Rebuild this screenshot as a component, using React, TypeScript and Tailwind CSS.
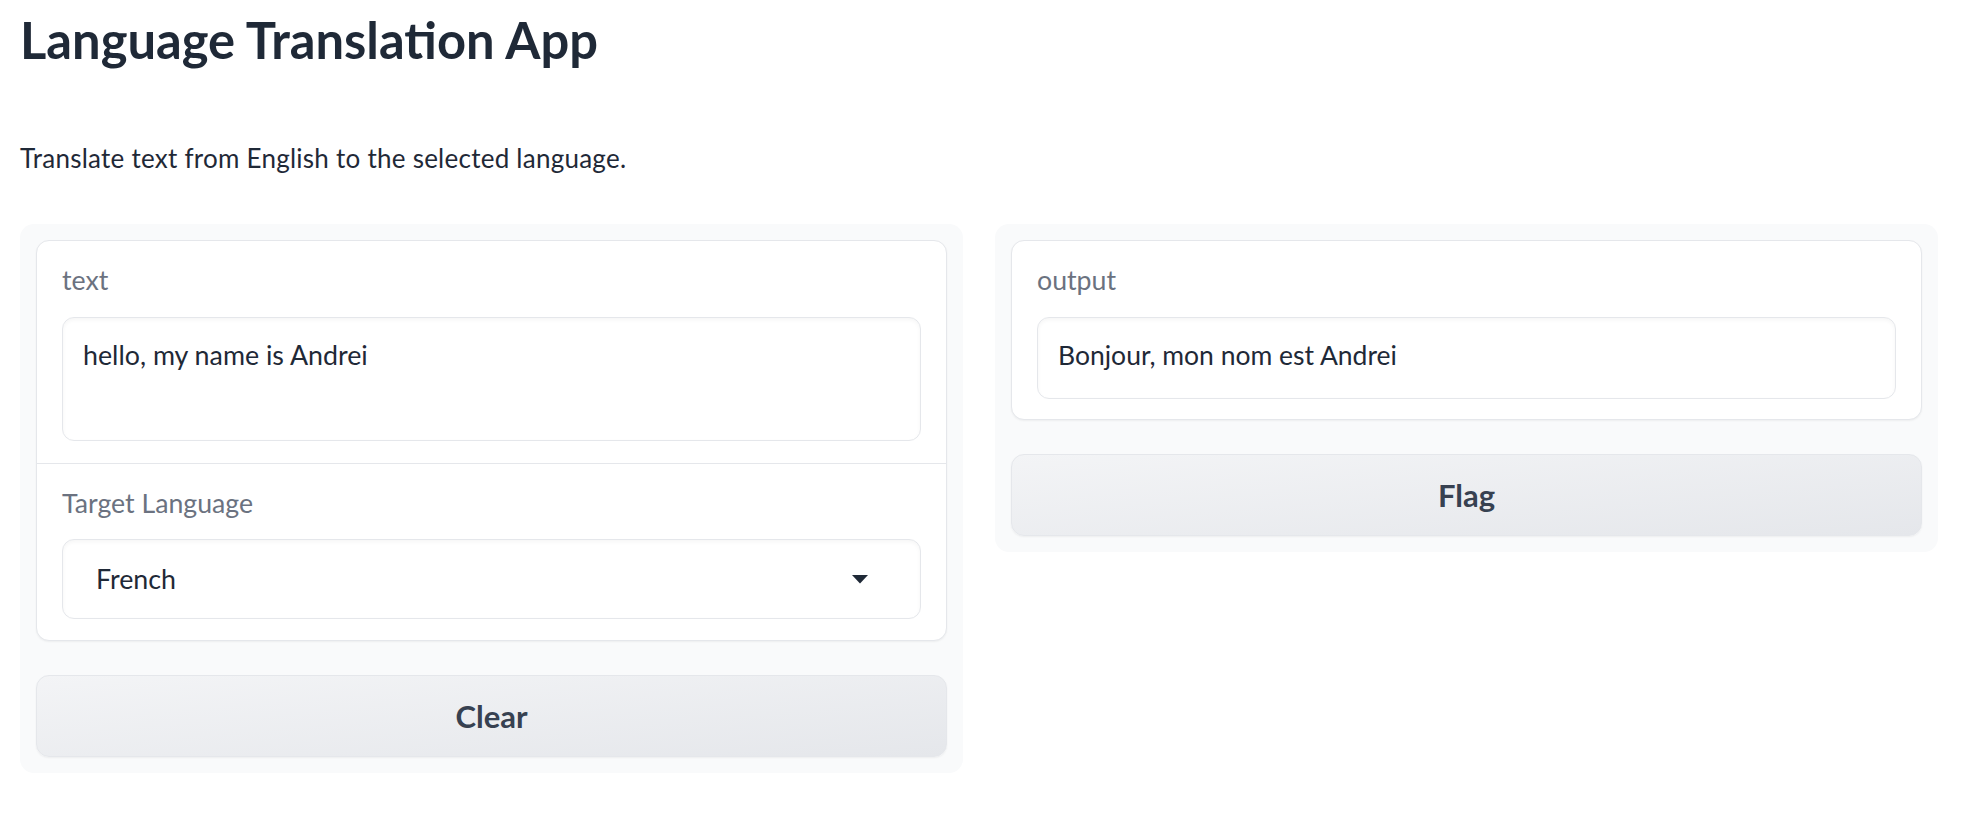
import React from "react";

const font = { fontFamily: "Lato, 'Noto Sans', sans-serif" };

function Label({ children, mb }: { children: React.ReactNode; mb: "a" | "b" }) {
  return (
    <div
      className={
        "h-[36px] text-[26.7px] leading-[36px] text-[#6b7280] " +
        (mb === "a" ? "mb-[19px]" : "mb-[18px]")
      }
    >
      {children}
    </div>
  );
}

export default function App() {
  return (
    <div className="w-[1976px] h-[836px] bg-white px-[20px] pt-[10px]" style={font}>
      <h1 className="h-[60px] text-[50.7px] leading-[60px] font-bold text-[#1f2937]">
        Language Translation App
      </h1>
      <p className="mt-[73px] text-[26px] tracking-[0.25px] leading-[30px] text-[#1f2937]">
        Translate text from English to the selected language.
      </p>
      <div className="mt-[51px] flex items-start gap-[32px]">
        {/* Left column */}
        <div className="w-[943px] bg-[#f9fafb] rounded-[14px] p-[16px] flex flex-col gap-[34px]">
          <div className="bg-white border border-[#e5e7eb] rounded-[13px] shadow-[0_1px_2px_rgba(0,0,0,0.05)]">
            <div className="px-[25px] pt-[21px] pb-[22px] border-b border-[#e5e7eb]">
              <Label mb="a">text</Label>
              <div className="h-[124px] rounded-[12px] border border-[#e5e7eb] shadow-[inset_0_2px_4px_rgba(0,0,0,0.04)] px-[20px] pt-[19px] text-[26.8px] leading-[36px] text-[#1f2937]">
                hello, my name is Andrei
              </div>
            </div>
            <div className="px-[25px] pt-[21px] pb-[21px]">
              <Label mb="b">Target Language</Label>
              <div className="h-[80px] rounded-[12px] border border-[#e5e7eb] shadow-[inset_0_2px_4px_rgba(0,0,0,0.04)] pl-[33px] pr-[52px] flex items-center justify-between text-[26.8px] text-[#1f2937]">
                <span>French</span>
                <svg width="16" height="9" viewBox="0 0 16 9">
                  <path d="M0 0 L16 0 L8 8.5 Z" fill="#1f2937" />
                </svg>
              </div>
            </div>
          </div>
          <button className="h-[82px] rounded-[13px] border border-[#e5e7eb] bg-gradient-to-br from-[#f3f4f6] to-[#e5e7eb] shadow-[0_1px_2px_rgba(0,0,0,0.05)] text-[31px] font-bold text-[#374151]">
            Clear
          </button>
        </div>
        {/* Right column */}
        <div className="w-[943px] bg-[#f9fafb] rounded-[14px] p-[16px] flex flex-col gap-[34px]">
          <div className="bg-white border border-[#e5e7eb] rounded-[13px] shadow-[0_1px_2px_rgba(0,0,0,0.05)]">
            <div className="px-[25px] pt-[21px] pb-[20px]">
              <Label mb="a">output</Label>
              <div className="h-[82px] rounded-[12px] border border-[#e5e7eb] shadow-[inset_0_2px_4px_rgba(0,0,0,0.04)] px-[20px] pt-[19px] text-[26.5px] leading-[36px] text-[#1f2937]">
                Bonjour, mon nom est Andrei
              </div>
            </div>
          </div>
          <button className="h-[82px] rounded-[13px] border border-[#e5e7eb] bg-gradient-to-br from-[#f3f4f6] to-[#e5e7eb] shadow-[0_1px_2px_rgba(0,0,0,0.05)] text-[31px] font-bold text-[#374151]">
            Flag
          </button>
        </div>
      </div>
    </div>
  );
}
